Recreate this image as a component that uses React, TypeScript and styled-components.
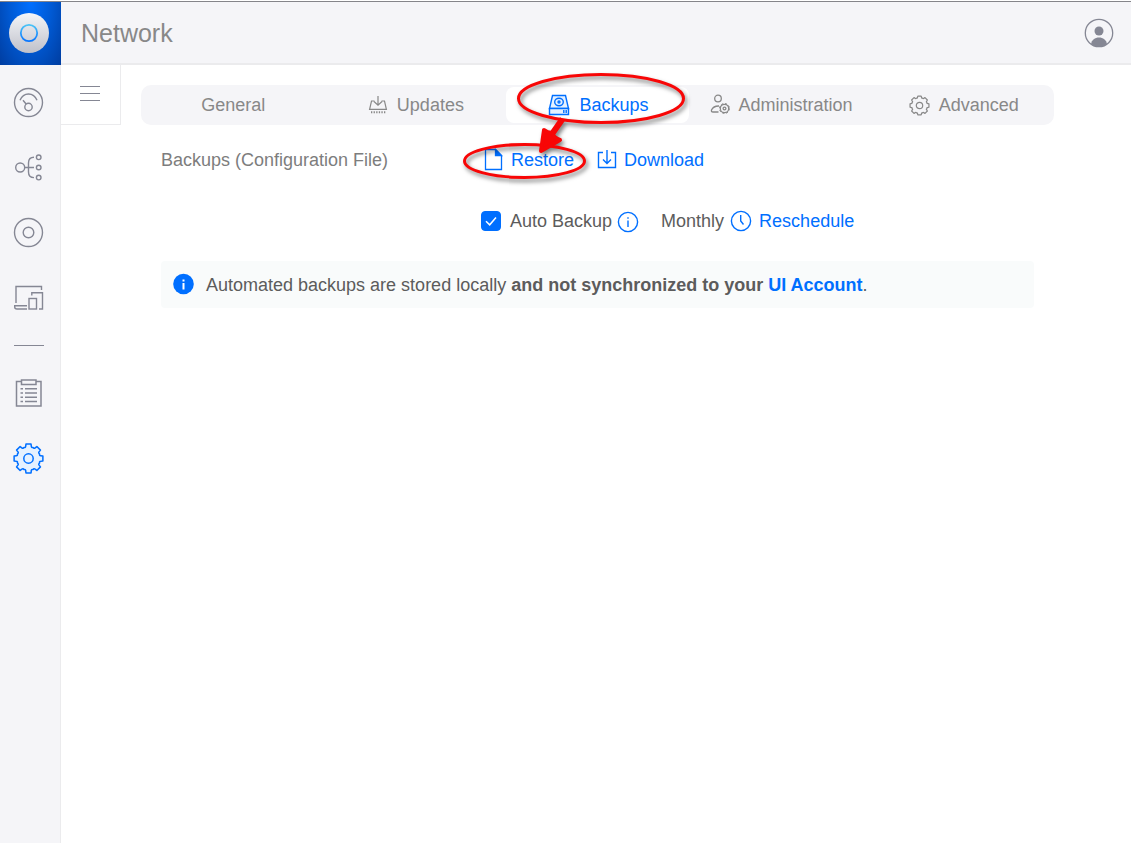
import React from "react";
import styled, { createGlobalStyle, css } from "styled-components";

const blue = "#006fff";
const grey = "#888";
const iconGrey = "#858794";
const panel = "#f5f5f8";
const line = "#ebebed";

const GlobalStyle = createGlobalStyle`
  *, *::before, *::after { box-sizing: border-box; }
  body {
    margin: 0;
    background: #fff;
    color: #5c5c5c;
    font-family: "Liberation Sans", Arial, sans-serif;
    font-size: 18px;
    line-height: 22px;
  }
  button, input { font: inherit; }
  svg { display: block; flex: none; overflow: visible; }
`;

const Page = styled.div`
  position: relative;
  display: grid;
  grid-template-columns: 61px minmax(0, 1fr);
  grid-template-rows: 65px 1fr;
  min-height: 100vh;
`;

const Header = styled.header`
  grid-column: 1 / -1;
  display: flex;
  align-items: stretch;
  margin-top: 1px;
  border-top: 1px solid #85858a;
  background: ${panel};
`;

const Logo = styled.a`
  display: grid;
  place-items: center;
  width: 61px;
  padding: 0 3px 2px 0;
  background: radial-gradient(ellipse at 50% 0, #006fff 0%, #0059d3 50%, #003da0 100%);
`;

const TitleBar = styled.div`
  flex: 1;
  display: flex;
  align-items: center;
  justify-content: space-between;
  padding: 0 17px 0 20px;
  border-bottom: 2px solid ${line};
`;

const Title = styled.h1`
  margin: 0;
  color: ${grey};
  font-size: 25px;
  font-weight: 400;
  line-height: 30px;
`;

const IconButton = styled.button`
  display: grid;
  place-items: center;
  padding: 0;
  border: 0;
  background: none;
  color: ${iconGrey};
  cursor: pointer;
`;

const Sidebar = styled.nav`
  display: flex;
  flex-direction: column;
  align-items: flex-start;
  gap: 35px;
  padding: 23px 0 0 13px;
  border-right: 1px solid ${line};
  background: ${panel};
`;

const NavLink = styled.a<{ $active?: boolean }>`
  display: block;
  color: ${(p) => (p.$active ? blue : iconGrey)};
`;

const NavDivider = styled.hr`
  width: 30px;
  margin: -3px 0 -3px 1px;
  border: 0;
  border-top: 1px solid ${iconGrey};
`;

const Body = styled.div`
  display: flex;
  align-items: flex-start;
`;

const MenuButton = styled(IconButton)`
  flex: none;
  width: 60px;
  height: 60px;
  padding: 0 2px 4px 0;
  border-right: 1px solid ${line};
  border-bottom: 1px solid ${line};
`;

const Main = styled.main`
  flex: 1;
  min-width: 0;
  padding: 20px 77px 40px 20px;
`;

const Tabs = styled.div`
  display: flex;
  height: 40px;
  padding: 2px 0;
  border-radius: 10px;
  background: ${panel};
`;

const Tab = styled.button<{ $active?: boolean }>`
  flex: 1 1 0;
  display: flex;
  align-items: center;
  justify-content: center;
  gap: 9px;
  padding: 0 0 0 2px;
  border: 0;
  border-radius: 8px;
  background: ${(p) => (p.$active ? "#fff" : "transparent")};
  color: ${(p) => (p.$active ? blue : grey)};
  cursor: pointer;
`;

const Settings = styled.div`
  display: grid;
  grid-template-columns: 320px 1fr;
  row-gap: 39px;
  padding: 24px 20px 29px;
`;

const RowLabel = styled.span`
  color: #7d7d7d;
`;

const Controls = styled.div`
  grid-column: 2;
  display: flex;
  align-items: center;
  gap: 22px;
`;

const Group = styled.div`
  display: flex;
  align-items: center;
  gap: 5px;
`;

const linkStyle = css`
  color: ${blue};
  text-decoration: none;
`;

const ActionButton = styled.button`
  ${linkStyle}
  display: flex;
  align-items: center;
  gap: 7px;
  padding: 0 0 0 1px;
  border: 0;
  background: none;
  cursor: pointer;
`;

const CheckLabel = styled.label`
  display: flex;
  align-items: center;
  gap: 9px;
`;

const CheckBox = styled.span`
  display: grid;
  width: 20px;
  height: 20px;
  > * { grid-area: 1 / 1; }
  svg { pointer-events: none; }
  input:not(:checked) + svg { visibility: hidden; }
`;

const CheckInput = styled.input`
  appearance: none;
  width: 20px;
  height: 20px;
  margin: 0;
  border: 1px solid ${blue};
  border-radius: 4px;
  &:checked { background: ${blue}; }
`;

const HintButton = styled(IconButton)`
  color: ${blue};
`;

const Notice = styled.div`
  display: flex;
  align-items: center;
  gap: 12px;
  margin: 0 20px;
  padding: 13px 12px 12px;
  border-radius: 4px;
  background: #f9fbfb;
`;

const NoticeLink = styled.a`
  ${linkStyle}
`;

const Annotation = styled.svg`
  position: absolute;
  top: 65px;
  left: 455px;
  pointer-events: none;
  filter: drop-shadow(2px 3px 2px rgba(0, 0, 0, 0.5));
`;

function gearPath(c: number, outer: number, inner: number) {
  const point = (r: number, deg: number) => {
    const a = ((deg - 90) * Math.PI) / 180;
    return `${(c + r * Math.cos(a)).toFixed(2)} ${(c + r * Math.sin(a)).toFixed(2)}`;
  };
  let d = "";
  for (let i = 0; i < 8; i++) {
    const t = i * 45;
    d += `${i ? "L" : "M"}${point(inner + 0.6, t - 13)}L${point(outer, t - 10)}`;
    d += `L${point(outer, t + 10)}L${point(inner + 0.6, t + 13)}`;
    d += `Q${point(inner - 0.8, t + 15)} ${point(inner, t + 22.5)}Q${point(inner - 0.8, t + 30)} ${point(inner + 0.6, t + 32)}`;
  }
  return `${d}Z`;
}

const Icon = ({ size = 20, sw = 1.4, children }: { size?: number; sw?: number; children: React.ReactNode }) => (
  <svg width={size} height={size} viewBox={`0 0 ${size} ${size}`} fill="none" stroke="currentColor" strokeWidth={sw} aria-hidden="true">
    {children}
  </svg>
);

const LogoIcon = () => (
  <svg width="40" height="40" viewBox="0 0 40 40" aria-hidden="true">
    <defs>
      <linearGradient id="disc" x1="0" y1="0" x2="0" y2="1">
        <stop offset="0" stopColor="#f4f5f8" />
        <stop offset="1" stopColor="#bfc1ca" />
      </linearGradient>
      <linearGradient id="ring" x1="0" y1="0" x2="0" y2="1">
        <stop offset="0" stopColor="#4cc4f6" />
        <stop offset="1" stopColor="#0875ff" />
      </linearGradient>
    </defs>
    <circle cx="20" cy="20" r="20" fill="url(#disc)" />
    <circle cx="20" cy="20" r="8.2" fill="none" stroke="url(#ring)" strokeWidth="1.8" />
  </svg>
);

const UserIcon = () => (
  <Icon size={30} sw={1.3}>
    <circle cx="15" cy="15" r="13.7" />
    <circle cx="15" cy="13" r="4.5" fill="currentColor" stroke="none" />
    <path d="M7 26.2C7.6 21.6 11 19.4 15 19.4S22.4 21.6 23 26.2Q19 28.8 15 28.8T7 26.2Z" fill="currentColor" stroke="none" />
  </Icon>
);

const DashboardIcon = () => (
  <Icon size={30}>
    <circle cx="15.5" cy="14.5" r="14" />
    <circle cx="15.5" cy="19" r="3.7" />
    <path d="M7 12.3C10.5 3.8 20.5 3.8 24 12.3M10 12.2L13.3 16.2" />
  </Icon>
);

const TopologyIcon = () => (
  <Icon size={30}>
    <circle cx="7.2" cy="14.5" r="4.5" />
    <circle cx="25.7" cy="4.3" r="2.3" />
    <circle cx="25.7" cy="14.5" r="2.3" />
    <circle cx="25.7" cy="24.6" r="2.3" />
    <path d="M12 14.5H21M21 4.3Q15.5 4.3 15.5 10V19Q15.5 24.6 21 24.6" />
  </Icon>
);

const DevicesIcon = () => (
  <Icon size={30}>
    <circle cx="15.5" cy="14.5" r="14" />
    <circle cx="15.5" cy="14.5" r="5.3" />
  </Icon>
);

const ClientsIcon = () => (
  <Icon size={30}>
    <path d="M3 20V3.5H28.500V7M18.800 12.500V9.800H29.500V26H26M14 22.700H1.700V24Q1.700 26 4 26H14" />
    <rect x="16" y="15.500" width="7.500" height="10.500" />
  </Icon>
);

const LogIcon = () => (
  <Icon size={30} sw={1.5}>
    <path d="M8 3.500H3.500V28H28V3.500H23" />
    <rect x="8.500" y="2" width="14.500" height="4.500" />
    <path d="M12 10.700H24M12 15H24M12 19.300H24M12 23.600H24" />
    <path d="M7.500 10.700H10M7.500 15H10M7.500 19.300H10M7.500 23.600H10" />
  </Icon>
);

const GearIcon = ({ size = 21, fill = "none" }: { size?: number; fill?: string }) => {
  const c = size / 2;
  return (
    <Icon size={size} sw={size > 24 ? 1.5 : 1.2}>
      <path d={gearPath(c, c - 0.9, c * 0.77)} fill={fill} strokeLinejoin="round" />
      <circle cx={c} cy={c} r={size > 24 ? 4.7 : 3.2} />
    </Icon>
  );
};

const UpdatesIcon = () => (
  <Icon sw={1.2}>
    <path d="M6.500 6H3.500L1.600 14.300H18.400L16.500 6H13.500M10 1V10M6 6.500L10 10.200L14 6.500" />
    <path d="M3 17.300H17.500" strokeDasharray="1.300 1.300" strokeWidth="2" />
  </Icon>
);

const DriveIcon = () => (
  <Icon size={22}>
    <path d="M4.500 1.500H17.500L20.500 14.500H1.500Z" fill="#e5f1ff" />
    <path d="M1.500 14.500H20.500V20.500H1.500Z" fill="#e5f1ff" />
    <ellipse cx="11" cy="8" rx="4.300" ry="3.700" />
    <circle cx="11" cy="8" r="1" />
    <path d="M15.800 16V19M18.200 16V19" />
  </Icon>
);

const AdminIcon = () => (
  <Icon sw={1.3}>
    <circle cx="8" cy="3.500" r="3.300" />
    <path d="M8.500 17H3Q1 17 1.500 15Q3.500 10.800 9 11" />
    <circle cx="14.500" cy="13.500" r="4.200" />
    <circle cx="14.500" cy="13.500" r="5" strokeWidth="1" strokeDasharray="2 1.930" />
    <circle cx="14.500" cy="13.500" r="1.400" />
  </Icon>
);

const FileIcon = () => (
  <Icon size={22} sw={1.3}>
    <path d="M3.500 .5H13.500L19.500 6.500V20.500H3.500Z" />
    <path d="M13.500 .5L19.500 6.500H13.500Z" fill="currentColor" />
  </Icon>
);

const DownloadIcon = () => (
  <Icon>
    <path d="M6 2.500H1.500V17.500H18.500V2.500H14M10 0V13.500M6 9.500L10 13.500L14 9.500" />
  </Icon>
);

const InfoIcon = () => (
  <Icon size={22}>
    <circle cx="11" cy="12" r="9.600" />
    <path d="M11 10.500V17M11 7.200V8.800" />
  </Icon>
);

const ClockIcon = () => (
  <Icon size={22}>
    <circle cx="11" cy="11" r="9.600" />
    <path d="M10.700 5V11L13.500 14.500" />
  </Icon>
);

const SolidInfoIcon = () => (
  <Icon size={21}>
    <circle cx="10.500" cy="9" r="10.300" fill={blue} stroke="none" />
    <path d="M10.500 8V14.500M10.500 4.500V6.500" stroke="#fff" strokeWidth="2" />
  </Icon>
);

const navItems = [
  { name: "Dashboard", icon: <DashboardIcon /> },
  { name: "Topology", icon: <TopologyIcon /> },
  { name: "Devices", icon: <DevicesIcon /> },
  { name: "Clients", icon: <ClientsIcon /> },
];

const tabs = [
  { name: "General", icon: null },
  { name: "Updates", icon: <UpdatesIcon /> },
  { name: "Backups", icon: <DriveIcon /> },
  { name: "Administration", icon: <AdminIcon /> },
  { name: "Advanced", icon: <GearIcon /> },
];

export default function App() {
  return (
    <Page>
      <GlobalStyle />
      <Header>
        <Logo href="#" aria-label="Home"><LogoIcon /></Logo>
        <TitleBar>
          <Title>Network</Title>
          <IconButton aria-label="Account"><UserIcon /></IconButton>
        </TitleBar>
      </Header>

      <Sidebar>
        {navItems.map((item) => (
          <NavLink key={item.name} href="#" aria-label={item.name}>{item.icon}</NavLink>
        ))}
        <NavDivider />
        <NavLink href="#" aria-label="System log"><LogIcon /></NavLink>
        <NavLink href="#" aria-label="Settings" $active><GearIcon size={31} fill="#e5f1ff" /></NavLink>
      </Sidebar>

      <Body>
        <MenuButton aria-label="Menu">
          <Icon sw={1}><path d="M0 3.500H20M0 10.500H20M0 17.500H20" /></Icon>
        </MenuButton>
        <Main>
          <Tabs role="tablist">
            {tabs.map((tab) => (
              <Tab key={tab.name} role="tab" aria-selected={tab.name === "Backups"} $active={tab.name === "Backups"}>
                {tab.icon}
                {tab.name}
              </Tab>
            ))}
          </Tabs>

          <Settings>
            <RowLabel>Backups (Configuration File)</RowLabel>
            <Controls>
              <ActionButton><FileIcon />Restore</ActionButton>
              <ActionButton><DownloadIcon />Download</ActionButton>
            </Controls>
            <Controls>
              <Group>
                <CheckLabel>
                  <CheckBox>
                    <CheckInput type="checkbox" defaultChecked />
                    <Icon sw={1.5}><path d="M5 10.200L8.700 13.800L15 6.500" stroke="#fff" /></Icon>
                  </CheckBox>
                  Auto Backup
                </CheckLabel>
                <HintButton aria-label="About auto backup"><InfoIcon /></HintButton>
              </Group>
              <Group>
                <span>Monthly</span>
                <ActionButton><ClockIcon />Reschedule</ActionButton>
              </Group>
            </Controls>
          </Settings>

          <Notice>
            <SolidInfoIcon />
            <span>
              Automated backups are stored locally <b>and not synchronized to your <NoticeLink href="#">UI Account</NoticeLink></b>.
            </span>
          </Notice>
        </Main>
      </Body>

      <Annotation width="240" height="125" viewBox="455 65 240 125" aria-hidden="true">
        <g fill="none" stroke="#f80606" strokeWidth="3">
          <ellipse cx="601" cy="98.500" rx="82.500" ry="24" />
          <ellipse cx="524.500" cy="161" rx="60" ry="16.500" />
        </g>
        <path d="M562.500 119L552 134" stroke="#f80606" strokeWidth="6" />
        <path d="M544 130L541 151L560 140Q554 138 552 133Q547 133 544 130Z" fill="#f80606" stroke="#f80606" strokeWidth="4" strokeLinejoin="round" />
      </Annotation>
    </Page>
  );
}
